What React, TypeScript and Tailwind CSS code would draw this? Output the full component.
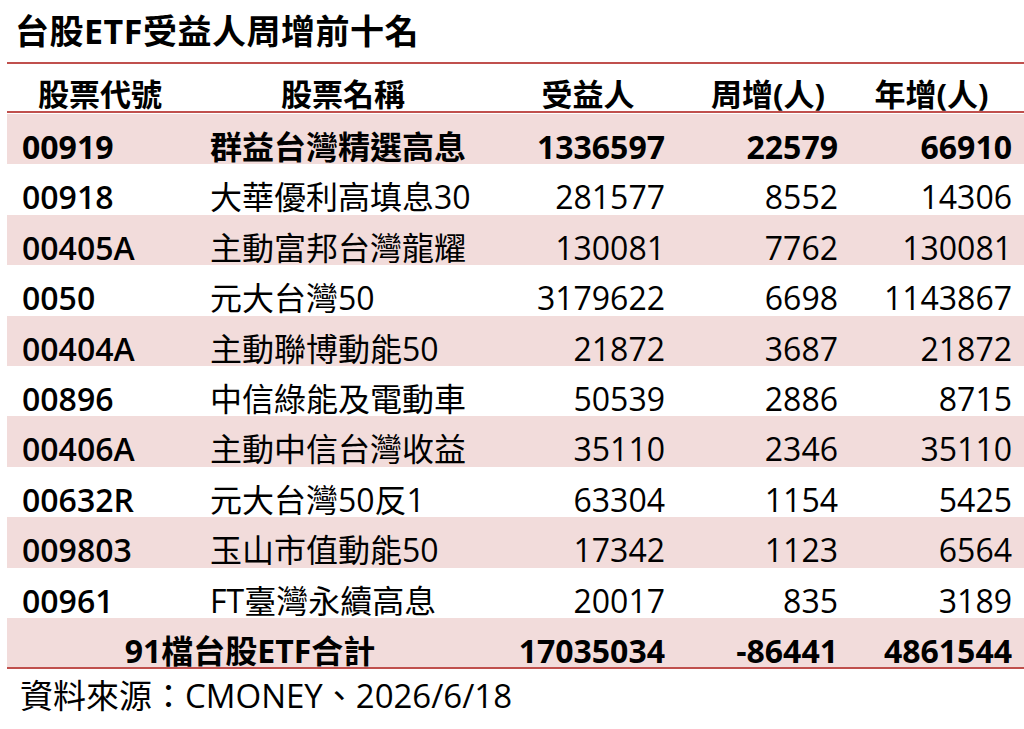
import React from 'react';

type Row = {
    code: string;
    name: string;
    holders: string;
    week: string;
    year: string;
    bold?: boolean;
};

const rows: Row[] = [
    { code: '00919', name: '群益台灣精選高息', holders: '1336597', week: '22579', year: '66910', bold: true },
    { code: '00918', name: '大華優利高填息30', holders: '281577', week: '8552', year: '14306' },
    { code: '00405A', name: '主動富邦台灣龍耀', holders: '130081', week: '7762', year: '130081' },
    { code: '0050', name: '元大台灣50', holders: '3179622', week: '6698', year: '1143867' },
    { code: '00404A', name: '主動聯博動能50', holders: '21872', week: '3687', year: '21872' },
    { code: '00896', name: '中信綠能及電動車', holders: '50539', week: '2886', year: '8715' },
    { code: '00406A', name: '主動中信台灣收益', holders: '35110', week: '2346', year: '35110' },
    { code: '00632R', name: '元大台灣50反1', holders: '63304', week: '1154', year: '5425' },
    { code: '009803', name: '玉山市值動能50', holders: '17342', week: '1123', year: '6564' },
    { code: '00961', name: 'FT臺灣永續高息', holders: '20017', week: '835', year: '3189' },
];

const cols = 'grid grid-cols-[186px_300px_190px_170px_1fr]';

export default function App() {
    return (
        <div
            className="w-[1024px] h-[729px] bg-white text-black overflow-hidden"
            style={{ fontFamily: '"Open Sans", "Noto Sans CJK TC", sans-serif' }}
        >
            <div className="h-[62px] pl-[15px] pt-[9px]">
                <h1 className="text-[34px] leading-[44px] font-bold tracking-[0.5px]">台股ETF受益人周增前十名</h1>
            </div>

            <div className="ml-[7px] border-t-2 border-b-2 border-[#c0504d]">
                <div className={`${cols} h-[49px] items-end text-[31px] leading-[34px] font-bold border-b-2 border-[#c0504d]`}>
                    <div className="text-center">股票代號</div>
                    <div className="text-center">股票名稱</div>
                    <div className="text-center">受益人</div>
                    <div className="text-center">周增(人)</div>
                    <div className="text-center pr-[14px]">年增(人)</div>
                </div>

                <div className="pt-[1px]">
                    {rows.map((r, i) => (
                        <div
                            key={r.code}
                            className={`${cols} h-[50.4px] items-center pt-[13px] text-[32px] leading-[40px] ${i % 2 === 0 ? 'bg-[#f2dcdb]' : 'bg-white'} ${r.bold ? 'font-bold' : ''}`}
                        >
                            <div className={`pl-[15px] ${r.bold ? 'font-bold' : 'font-semibold'}`}>{r.code}</div>
                            <div className="pl-[17px]">{r.name}</div>
                            <div className="text-right pr-[18px]">{r.holders}</div>
                            <div className="text-right pr-[15px]">{r.week}</div>
                            <div className="text-right pr-[12px]">{r.year}</div>
                        </div>
                    ))}
                </div>

                <div className={`${cols} h-[49px] items-center pt-[13px] text-[32px] leading-[40px] font-bold bg-[#f2dcdb]`}>
                    <div className="col-span-2 text-center">91檔台股ETF合計</div>
                    <div className="text-right pr-[18px]">17035034</div>
                    <div className="text-right pr-[15px]">-86441</div>
                    <div className="text-right pr-[12px]">4861544</div>
                </div>
            </div>

            <div className="pl-[20px] pt-[7px] text-[33px] leading-[40px]">資料來源：CMONEY、2026/6/18</div>
        </div>
    );
}
